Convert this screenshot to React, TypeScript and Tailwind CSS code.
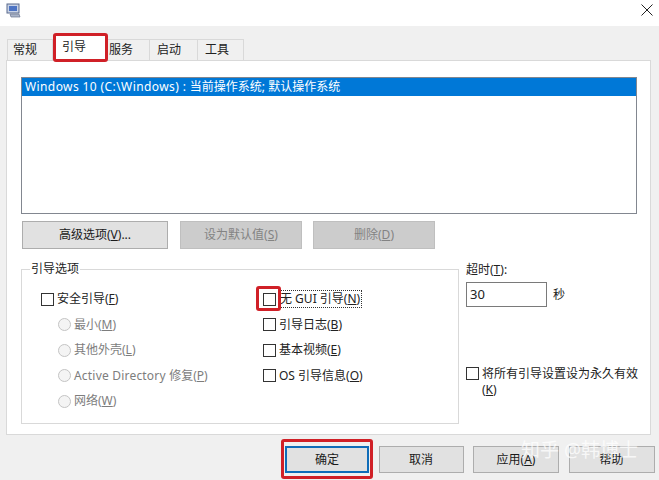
const font = "font-['Noto_Sans','Noto_Sans_CJK_SC',sans-serif]"

function Tab({ label, width, pad, active }: { label: string; width: string; pad?: string; active?: boolean }) {
  return (
    <div
      className={
        active
          ? `${width} h-[27px] -mb-px z-10 bg-white border border-b-0 border-[#d9d9d9] pl-[8px] pt-[3px] leading-[18px]`
          : `${width} ${pad ?? "pl-[6px]"} h-[21px] bg-[#f0f0f0] border border-b-0 border-l-0 border-[#d9d9d9] pt-[1px] leading-[18px]`
      }
    >
      {label}
    </div>
  )
}

function Btn({ children, width, disabled, primary }: { children: React.ReactNode; width: string; disabled?: boolean; primary?: boolean }) {
  const look = disabled
    ? "bg-[#cccccc] border-[#bfbfbf] text-[#838383]"
    : primary
      ? "bg-[#e1e1e1] border-2 border-[#0f6cb8] text-[#1a1a1a]"
      : "bg-[#e1e1e1] border-[#adadad] text-[#1a1a1a]"
  return <div className={`${width} h-full border flex items-center justify-center ${look}`}>{children}</div>
}

function Check({ children, className }: { children: React.ReactNode; className?: string }) {
  return (
    <div className={`flex items-center h-[18px] ${className ?? ""}`}>
      <div className="w-[13px] h-[13px] border border-[#333333] bg-white shrink-0" />
      <div className="ml-[3px] whitespace-nowrap leading-[18px]">{children}</div>
    </div>
  )
}

function Radio({ children }: { children: React.ReactNode }) {
  return (
    <div className="flex items-center h-[18px] pl-[17px] text-[#7d7d7d]">
      <div className="w-[13px] h-[13px] rounded-full border border-[#c4c4c4] bg-[#f4f4f4] shrink-0" />
      <div className="ml-[3px] whitespace-nowrap leading-[18px]">{children}</div>
    </div>
  )
}

function AppIcon() {
  return (
    <svg width="15" height="15" viewBox="0 0 15 15">
      <rect x="1" y="1" width="12" height="9" fill="#c9d3e6" stroke="#5a6a8c" />
      <rect x="3" y="3" width="8" height="5" fill="#4d74c4" />
      <path d="M4 11 L13 11 L14 14 L5 14 Z" fill="#aab4c8" stroke="#6c7690" strokeWidth="0.7" />
    </svg>
  )
}

export default function App() {
  return (
    <div className={`relative w-[659px] h-[480px] overflow-hidden bg-[#f0f0f0] text-[12px] text-[#222222] ${font}`}>
      {/* title bar */}
      <div className="h-[26px] bg-white flex items-start justify-between pl-[6px] pr-[5px] pt-[3px]">
        <AppIcon />
        <svg width="12" height="12" viewBox="0 0 12 12" className="mr-[1px] mt-[1px]">
          <path d="M0.5 0.5 L11.5 11.5 M11.5 0.5 L0.5 11.5" stroke="#222222" strokeWidth="1" />
        </svg>
      </div>

      {/* tabs */}
      <div className="flex items-end h-[34px] pl-[7px]">
        <div className="w-[46px] h-[21px] border border-b-0 border-[#d9d9d9] pl-[5px] pt-[1px] leading-[18px]">常规</div>
        <Tab label="引导" width="w-[53px]" active />
        <Tab label="服务" width="w-[44px]" pad="pl-[3px]" />
        <Tab label="启动" width="w-[48px]" pad="pl-[7px]" />
        <Tab label="工具" width="w-[46px]" pad="pl-[7px]" />
      </div>

      {/* page */}
      <div className="ml-[6px] w-[645px] h-[375px] bg-white border border-[#d9d9d9] pl-[14px] pt-[16px]">
        <div className="w-[616px] h-[137px] border border-[#828790]">
          <div className="h-[18px] bg-[#0078d7] text-white leading-[18px] pl-[3px] whitespace-nowrap">
            <span className="tracking-[0.4px]">Windows 10 (C:\Windows) : </span>当前操作系统; 默认操作系统
          </div>
        </div>

        <div className="flex h-[28px] mt-[7px] ml-px">
          <Btn width="w-[146px]"><span>高级选项(<u>V</u>)...</span></Btn>
          <div className="w-[12px]" />
          <Btn width="w-[122px]" disabled><span>设为默认值(<u>S</u>)</span></Btn>
          <div className="w-[11px]" />
          <Btn width="w-[122px]" disabled><span>删除(<u>D</u>)</span></Btn>
        </div>

        <div className="flex mt-[20px]">
          {/* boot options */}
          <div className="relative w-[438px] h-[155px] border border-[#d9d9d9] pl-[19px] pt-[20px] grid grid-cols-[222px_1fr]">
            <div className="absolute left-[8px] -top-[9px] bg-white px-px leading-[16px]">引导选项</div>
            <div className="flex flex-col gap-[7.5px]">
              <Check>安全引导(<u>F</u>)</Check>
              <Radio>最小(<u>M</u>)</Radio>
              <Radio>其他外壳(<u>L</u>)</Radio>
              <Radio><span className="tracking-[0.2px]">Active Directory </span>修复(<u>P</u>)</Radio>
              <Radio>网络(<u>W</u>)</Radio>
            </div>
            <div className="flex flex-col gap-[7.5px]">
              <Check>
                <span className="border border-dotted border-[#333333] inline-block h-[18px] leading-[16px] pr-[1px]">
                  无 GUI 引导(<u>N</u>)
                </span>
              </Check>
              <Check>引导日志(<u>B</u>)</Check>
              <Check>基本视频(<u>E</u>)</Check>
              <Check>OS 引导信息(<u>O</u>)</Check>
            </div>
          </div>

          {/* timeout */}
          <div className="ml-[7px] w-[172px] -mt-[7px] flex flex-col">
            <div className="leading-[16px]">超时(<u>T</u>):</div>
            <div className="flex items-center mt-[4px]">
              <div className="w-[81px] h-[25px] border border-[#7a7a7a] pl-[3px] leading-[22px] text-[13px]">30</div>
              <div className="ml-[6px]">秒</div>
            </div>
            <div className="flex mt-[59px]">
              <div className="w-[13px] h-[13px] mt-[1px] border border-[#333333] shrink-0" />
              <div className="ml-[3px] leading-[16px] w-[160px]">将所有引导设置设为永久有效(<u>K</u>)</div>
            </div>
          </div>
        </div>
      </div>

      {/* bottom buttons */}
      <div className="flex h-[27px] mt-[11px] ml-[285px] gap-[9.5px]">
        <Btn width="w-[84px]" primary>确定</Btn>
        <Btn width="w-[85px]">取消</Btn>
        <Btn width="w-[86px]"><span>应用(<u>A</u>)</span></Btn>
        <Btn width="w-[86px]"><span>帮助</span></Btn>
      </div>

      {/* red annotation boxes */}
      <div className="absolute z-20 left-[53px] top-[33px] w-[55px] h-[29px] border-[3px] border-[#d02027] rounded-[3px]" />
      <div className="absolute z-20 left-[256px] top-[286px] w-[25px] h-[25px] border-[3px] border-[#d02027] rounded-[3px]" />
      <div className="absolute z-20 left-[281px] top-[439px] w-[92px] h-[40px] border-[3px] border-[#d02027] rounded-[3px]" />

      {/* watermark */}
      <div className="absolute z-20 left-[521px] top-[436px] text-[19px] leading-[28px] text-white/75 whitespace-nowrap">知乎 @韩博士</div>
    </div>
  )
}
